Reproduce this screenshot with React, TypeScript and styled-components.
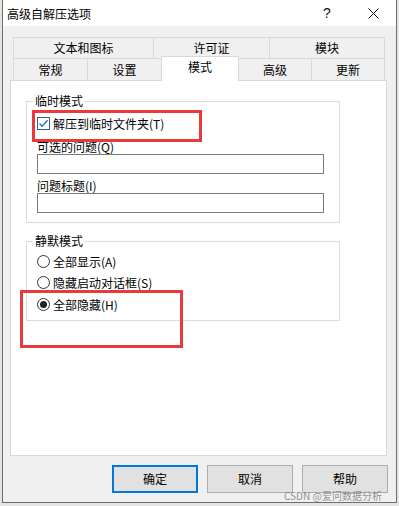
import React from "react";
import styled, { createGlobalStyle, css } from "styled-components";

const GlobalStyle = createGlobalStyle`
  html, body {
    margin: 0;
    padding: 0;
    background: #e4e4e4;
  }
  * { box-sizing: border-box; }
  body {
    font-family: "Noto Sans CJK SC", "Noto Sans", sans-serif;
    font-size: 12px;
    color: #000;
  }
`;

const Page = styled.div`
  position: relative;
  width: 399px;
  height: 506px;
  background: #e4e4e4;
  overflow: hidden;
`;

const Window = styled.div`
  margin-left: 2px;
  width: 395px;
  height: 503px;
  background: #f0f0f0;
  border: 1px solid #6e6e6e;
  border-top: none;
  display: flex;
  flex-direction: column;
`;

const TitleBar = styled.div`
  height: 26px;
  background: #ffffff;
  display: flex;
  align-items: center;
  padding-left: 4px;
  flex-shrink: 0;
`;

const TitleText = styled.div`
  flex: 1;
  font-size: 12px;
  line-height: 16px;
  padding-top: 1px;
`;

const CaptionButton = styled.div`
  width: 46px;
  height: 26px;
  display: flex;
  align-items: center;
  justify-content: center;
  font-family: "Liberation Sans", "Noto Sans", sans-serif;
  font-size: 14px;
  color: #111;
`;

const Body = styled.div`
  flex: 1;
  display: flex;
  flex-direction: column;
  padding: 11px 9px 0 7px;
`;

const TabRows = styled.div`
  display: flex;
  flex-direction: column;
  padding: 0 2px 0 3px;
`;

const TabRow = styled.div<{ $height: number }>`
  display: flex;
  height: ${(p) => p.$height}px;
  align-items: flex-end;
`;

const Tab = styled.div<{ $w: number; $active?: boolean; $h: number }>`
  width: ${(p) => p.$w}px;
  height: ${(p) => p.$h}px;
  flex-shrink: 0;
  display: flex;
  align-items: center;
  justify-content: center;
  border: 1px solid #d9d9d9;
  border-bottom: none;
  background: #f0f0f0;
  font-size: 12px;
  line-height: 16px;
  & + & {
    margin-left: -1px;
  }
  ${(p) =>
    p.$active &&
    css`
      position: relative;
      z-index: 1;
      background: #ffffff;
      margin-top: -2px;
      margin-bottom: -1px;
      padding-bottom: 4px;
    `}
`;

const Panel = styled.div`
  height: 376px;
  background: #ffffff;
  border: 1px solid #d9d9d9;
  padding: 12px 0 0 15px;
  display: flex;
  flex-direction: column;
`;

const Group = styled.fieldset<{ $pb: number; $mt?: number }>`
  width: 314px;
  margin: ${(p) => p.$mt ?? 0}px 0 0 0;
  padding: 0 0 ${(p) => p.$pb}px 10px;
  border: 1px solid #dcdcdc;
  display: flex;
  flex-direction: column;
  min-width: 0;
`;

const Legend = styled.legend`
  font-size: 12px;
  line-height: 16px;
  padding: 0 2px;
  margin-left: -4px;
`;

const OptionRow = styled.label<{ $mt: number }>`
  display: flex;
  align-items: center;
  height: 17px;
  margin-top: ${(p) => p.$mt}px;
  font-size: 12px;
  line-height: 16px;
  gap: 3px;
`;

const CheckBox = styled.span`
  width: 13px;
  height: 13px;
  border: 1px solid #2f5f96;
  background: #fff;
  display: flex;
  align-items: center;
  justify-content: center;
  flex-shrink: 0;
`;

const Radio = styled.span<{ $checked?: boolean }>`
  width: 13px;
  height: 13px;
  border-radius: 50%;
  border: 1px solid #333;
  background: #fff;
  display: flex;
  align-items: center;
  justify-content: center;
  flex-shrink: 0;
  &::after {
    content: "";
    display: ${(p) => (p.$checked ? "block" : "none")};
    width: 7px;
    height: 7px;
    border-radius: 50%;
    background: #222;
  }
`;

const FieldLabel = styled.div<{ $mt: number }>`
  font-size: 12px;
  line-height: 15px;
  margin-top: ${(p) => p.$mt}px;
`;

const TextBox = styled.div`
  width: 287px;
  height: 20px;
  border: 1px solid #7a7a7a;
  background: #fff;
`;

const ButtonBar = styled.div`
  display: flex;
  justify-content: flex-end;
  gap: 9px;
  margin-top: 9px;
  margin-right: -1px;
`;

const Button = styled.div<{ $primary?: boolean }>`
  width: 86px;
  height: 28px;
  display: flex;
  align-items: center;
  justify-content: center;
  background: #e1e1e1;
  border: ${(p) => (p.$primary ? "2px solid #0078d7" : "1px solid #adadad")};
  font-size: 12px;
  line-height: 16px;
`;

const Highlight = styled.div<{ $x: number; $y: number; $w: number; $h: number }>`
  position: absolute;
  left: ${(p) => p.$x}px;
  top: ${(p) => p.$y}px;
  width: ${(p) => p.$w}px;
  height: ${(p) => p.$h}px;
  border: 3px solid #e8393b;
  pointer-events: none;
`;

const Watermark = styled.div`
  position: absolute;
  left: 284px;
  top: 489px;
  font-size: 10px;
  line-height: 13px;
  color: rgba(110, 110, 110, 0.75);
  white-space: nowrap;
`;

const row1 = [
  { label: "文本和图标", w: 141 },
  { label: "许可证", w: 117 },
  { label: "模块", w: 116 },
];
const row2 = [
  { label: "常规", w: 75 },
  { label: "设置", w: 75 },
  { label: "模式", w: 78, active: true },
  { label: "高级", w: 74 },
  { label: "更新", w: 74 },
];

export default function App() {
  return (
    <Page>
      <GlobalStyle />
      <Window>
        <TitleBar>
          <TitleText>高级自解压选项</TitleText>
          <CaptionButton>?</CaptionButton>
          <CaptionButton>
            <svg width="11" height="11" viewBox="0 0 11 11">
              <path d="M0.5 0.5 L10.5 10.5 M10.5 0.5 L0.5 10.5" stroke="#111" strokeWidth="1" fill="none" />
            </svg>
          </CaptionButton>
        </TitleBar>
        <Body>
          <TabRows>
            <TabRow $height={21}>
              {row1.map((t) => (
                <Tab key={t.label} $w={t.w} $h={21}>
                  {t.label}
                </Tab>
              ))}
            </TabRow>
            <TabRow $height={22}>
              {row2.map((t) => (
                <Tab key={t.label} $w={t.w} $h={t.active ? 25 : 22} $active={t.active}>
                  {t.label}
                </Tab>
              ))}
            </TabRow>
          </TabRows>
          <Panel>
            <Group $pb={9}>
              <Legend>临时模式</Legend>
              <OptionRow $mt={6}>
                <CheckBox>
                  <svg width="11" height="11" viewBox="0 0 11 11">
                    <path d="M1.5 5.5 L4.2 8.3 L9.6 2.2" stroke="#1e73c8" strokeWidth="1.3" fill="none" />
                  </svg>
                </CheckBox>
                解压到临时文件夹(T)
              </OptionRow>
              <FieldLabel $mt={7}>可选的问题(Q)</FieldLabel>
              <TextBox />
              <FieldLabel $mt={4}>问题标题(I)</FieldLabel>
              <TextBox />
            </Group>
            <Group $pb={7} $mt={10}>
              <Legend>静默模式</Legend>
              <OptionRow $mt={4}>
                <Radio />
                全部显示(A)
              </OptionRow>
              <OptionRow $mt={4}>
                <Radio />
                隐藏启动对话框(S)
              </OptionRow>
              <OptionRow $mt={5}>
                <Radio $checked />
                全部隐藏(H)
              </OptionRow>
            </Group>
          </Panel>
          <ButtonBar>
            <Button $primary>确定</Button>
            <Button>取消</Button>
            <Button>帮助</Button>
          </ButtonBar>
        </Body>
      </Window>
      <Highlight $x={32} $y={110} $w={170} $h={32} />
      <Highlight $x={20} $y={290} $w={163} $h={58} />
      <Watermark>CSDN @爱问数据分析</Watermark>
    </Page>
  );
}
